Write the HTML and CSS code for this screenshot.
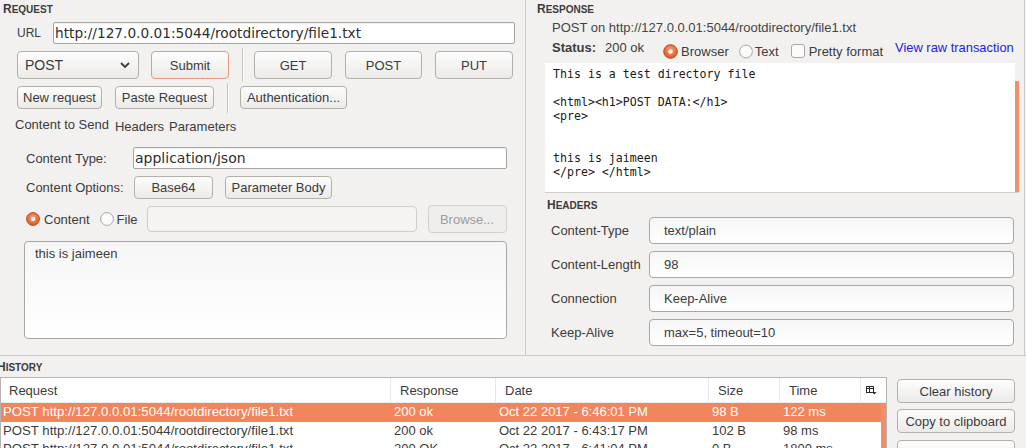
FILE: index.html
```html
<!DOCTYPE html>
<html>
<head>
<meta charset="utf-8">
<link rel="stylesheet" href="styles.css">
</head>
<body>
<div class="top">
  <section class="req">
    <div class="title"><span class="cap">R</span>EQUEST</div>
    <div class="url-row">
      <span class="url-label">URL</span>
      <div class="field url-field">http://127.0.0.01:5044/rootdirectory/file1.txt</div>
    </div>
    <div class="row-c">
      <div class="btn combo"><span class="combo-text">POST</span>
        <svg width="10" height="6" viewBox="0 0 10 6"><path d="M1 1 L5 5 L9 1" fill="none" stroke="#3c3c3c" stroke-width="1.8"/></svg>
      </div>
      <div class="btn submit">Submit</div>
      <div class="vsep sep-c"></div>
      <div class="btn w-get">GET</div>
      <div class="btn w-post">POST</div>
      <div class="btn w-put">PUT</div>
    </div>
    <div class="row-d">
      <div class="btn w-new">New request</div>
      <div class="btn w-paste">Paste Request</div>
      <div class="vsep sep-d"></div>
      <div class="btn w-auth">Authentication...</div>
    </div>
    <div class="tabs">
      <span class="tab tab-sel">Content to Send</span>
      <span class="tab tab-h">Headers</span>
      <span class="tab tab-p">Parameters</span>
    </div>
    <div class="tab-body">
      <div class="ct-row">
        <span class="lbl lbl-ct">Content Type:</span>
        <div class="field ct-field">application/json</div>
      </div>
      <div class="co-row">
        <span class="lbl lbl-co">Content Options:</span>
        <div class="btn w-b64">Base64</div>
        <div class="btn w-pb">Parameter Body</div>
      </div>
      <div class="radio-row">
        <svg class="radio r-content" width="14" height="14" viewBox="0 0 14 14"><defs><radialGradient id="og" cx="50%" cy="40%" r="60%"><stop offset="0" stop-color="#f8a47c"/><stop offset="1" stop-color="#dc5422"/></radialGradient></defs><circle cx="7" cy="7" r="6.4" fill="url(#og)" stroke="#bd4a1c" stroke-width="1"/><circle cx="7" cy="7" r="2.2" fill="#fdf0e8"/></svg>
        <span class="rlabel">Content</span>
        <svg class="radio r-file" width="14" height="14" viewBox="0 0 14 14"><circle cx="7" cy="7" r="6.4" fill="#fbfbfb" stroke="#a9a7a3" stroke-width="1"/></svg>
        <span class="rlabel">File</span>
        <div class="dis-field"></div>
        <div class="btn btn-dis w-browse">Browse...</div>
      </div>
      <div class="textarea">this is jaimeen</div>
    </div>
  </section>
  <section class="resp">
    <div class="title resp-title"><span class="cap">R</span>ESPONSE</div>
    <div class="resp-url">POST on http://127.0.0.01:5044/rootdirectory/file1.txt</div>
    <div class="status-row">
      <span class="st-label">Status:</span>
      <span class="st-val">200 ok</span>
      <svg class="radio r-browser" width="15" height="15" viewBox="0 0 15 15"><circle cx="7.5" cy="7.5" r="6.8" fill="url(#og)" stroke="#bd4a1c" stroke-width="1"/><circle cx="7.5" cy="7.5" r="2.3" fill="#fdf0e8"/></svg>
      <span class="opt opt-browser">Browser</span>
      <svg class="radio r-text" width="14" height="15" viewBox="0 0 14 15"><circle cx="7" cy="7.5" r="6.4" fill="#fbfbfb" stroke="#a9a7a3" stroke-width="1"/></svg>
      <span class="opt opt-text">Text</span>
      <svg class="check" width="14" height="14" viewBox="0 0 14 14"><rect x="0.5" y="0.5" width="13" height="13" rx="2.5" fill="#fbfbfb" stroke="#a9a7a3"/></svg>
      <span class="opt opt-pretty">Pretty format</span>
      <span class="link">View raw transaction</span>
    </div>
    <div class="resp-box">
      <pre class="resp-text">This is a test directory file

&lt;html&gt;&lt;h1&gt;POST DATA:&lt;/h1&gt;
&lt;pre&gt;


this is jaimeen
&lt;/pre&gt; &lt;/html&gt;</pre>
      <div class="vscroll"><div class="thumb"></div></div>
    </div>
    <div class="title hdr-title"><span class="cap">H</span>EADERS</div>
    <div class="hdr-grid">
      <span class="hlabel">Content-Type</span><div class="hval">text/plain</div>
      <span class="hlabel">Content-Length</span><div class="hval">98</div>
      <span class="hlabel">Connection</span><div class="hval">Keep-Alive</div>
      <span class="hlabel">Keep-Alive</span><div class="hval">max=5, timeout=10</div>
    </div>
  </section>
</div>
<div class="history">
  <div class="title hist-title"><span class="cap">H</span>ISTORY</div>
  <div class="hist-body">
    <div class="table">
      <div class="thead">
        <div class="th th-first">Request</div>
        <div class="th">Response</div>
        <div class="th">Date</div>
        <div class="th">Size</div>
        <div class="th">Time</div>
        <div class="th th-icon">
          <svg width="11" height="9" viewBox="0 0 11 9"><rect x="0.5" y="0.5" width="7" height="6" fill="none" stroke="#2a2a2a"/><line x1="0.5" y1="2.5" x2="7.5" y2="2.5" stroke="#2a2a2a"/><line x1="3.5" y1="0.5" x2="3.5" y2="6.5" stroke="#2a2a2a"/><path d="M6 6 L10.5 6 L8.25 8.5 Z" fill="#2a2a2a"/></svg>
        </div>
      </div>
      <div class="tbody">
        <div class="rows">
          <div class="tr sel"><span>POST http://127.0.0.01:5044/rootdirectory/file1.txt</span><span>200 ok</span><span>Oct 22 2017 - 6:46:01 PM</span><span>98 B</span><span>122 ms</span><span></span></div>
          <div class="tr"><span>POST http://127.0.0.01:5044/rootdirectory/file1.txt</span><span>200 ok</span><span>Oct 22 2017 - 6:43:17 PM</span><span>102 B</span><span>98 ms</span><span></span></div>
          <div class="tr"><span>POST http://127.0.0.01:5044/rootdirectory/file1.txt</span><span>200 OK</span><span>Oct 22 2017 - 6:41:04 PM</span><span>0 B</span><span>1800 ms</span><span></span></div>
        </div>
        <div class="tscroll"></div>
      </div>
    </div>
    <div class="hist-btns">
      <div class="btn hb hb1">Clear history</div>
      <div class="btn hb hb2">Copy to clipboard</div>
      <div class="btn hb hb3">Delete request</div>
    </div>
  </div>
</div>
</body>
</html>
```
FILE: styles.css
```css
* { box-sizing: border-box; }
html, body { margin: 0; padding: 0; }
body {
  width: 1026px; height: 448px; overflow: hidden;
  background: #f2f1f0;
  font-family: "Liberation Sans", Arial, sans-serif;
  font-size: 13px; color: #3c3c3c;
}
.top { display: flex; height: 356px; border-bottom: 1px solid #cdcbc7; }
.req { width: 526px; border-right: 1px solid #cdcbc7; }
.resp { width: 499px; border-right: 1px solid #cdcbc7; }

.title {
  height: 18px; padding-top: 1px; line-height: 18px;
  font-weight: bold; font-size: 10px; color: #3c3c3c; padding-left: 3px;
  white-space: nowrap;
}
.title .cap { font-size: 12px; line-height: 1; }

.btn {
  display: flex; align-items: center; justify-content: center;
  height: 100%; border: 1px solid #b3b0aa; border-radius: 4px;
  background: linear-gradient(#fdfdfd, #ebeae8);
  color: #3c3c3c; white-space: nowrap; flex: none;
}

/* URL row */
.url-row { display: flex; align-items: center; height: 22px; margin-top: 4px; padding-left: 17px; }
.url-label { width: 36px; font-size: 12px; }
.field {
  display: flex; align-items: center; height: 22px;
  background: #fff; border: 1px solid #a6a4a0; border-radius: 2px;
  box-shadow: inset 0 1px 1px rgba(0,0,0,0.06);
  padding-left: 1px; font-family: "DejaVu Sans", sans-serif; font-size: 14px; color: #2e2e2e;
  white-space: nowrap;
}
.url-field { width: 462px; font-size: 13.7px; }

/* row c */
.row-c { display: flex; align-items: center; height: 28px; margin-top: 7px; padding-left: 17px; }
.combo { width: 122px; justify-content: space-between; padding: 0 8px 0 7px; }
.combo-text { font-size: 14px; }
.submit { width: 78px; margin-left: 12px; border-color: #e29a80; }
.vsep { width: 2px; border-left: 1px solid #c6c4c0; border-right: 1px solid #fbfbfa; flex: none; }
.sep-c { height: 34px; margin-left: 13px; }
.w-get { width: 78px; margin-left: 10px; }
.w-post { width: 77px; margin-left: 13px; }
.w-put { width: 78px; margin-left: 13px; }

/* row d */
.row-d { display: flex; align-items: center; height: 23px; margin-top: 7px; padding-left: 17px; }
.w-new { width: 85px; }
.w-paste { width: 99px; margin-left: 13px; }
.sep-d { height: 30px; margin-left: 13px; }
.w-auth { width: 107px; margin-left: 11px; }

/* tabs */
.tabs { display: flex; height: 17px; margin-top: 8px; line-height: 15px; align-items: flex-start; }
.tab-sel { margin-left: 15px; }
.tab-h { margin-left: 6px; padding-top: 2px; }
.tab-p { margin-left: 5px; padding-top: 2px; }

.tab-body { padding-left: 24px; }
.lbl { padding-left: 2px; flex: none; }
.ct-row { display: flex; align-items: center; height: 22px; margin-top: 13px; }
.lbl-ct { width: 109px; }
.ct-field { width: 374px; }
.co-row { display: flex; align-items: center; height: 23px; margin-top: 7px; }
.lbl-co { width: 110px; }
.w-b64 { width: 79px; }
.w-pb { width: 107px; margin-left: 12px; }

.radio-row { display: flex; align-items: center; height: 28px; margin-top: 6px; }
.radio { flex: none; display: block; }
.r-content { margin-left: 2px; }
.rlabel { margin-left: 4px; }
.r-file { margin-left: 10px; }
.r-file + .rlabel { margin-left: 3px; }
.dis-field {
  width: 270px; height: 26px; margin-left: 9px;
  border: 1px solid #d0cecb; border-radius: 4px; background: #f5f4f3;
}
.btn-dis { background: #efeeed; border-color: #d2d0cd; color: #9c9c9c; }
.w-browse { width: 79px; margin-left: 11px; }

.textarea {
  width: 483px; height: 98px; margin-top: 8px;
  border: 1px solid #a9a7a3; border-radius: 4px;
  background: linear-gradient(#f6f6f6, #ffffff);
  padding: 4px 0 0 10px; line-height: 15px;
}

/* response */
.resp-title { padding-left: 11px; }
.resp-url { padding-left: 26px; margin-top: 2px; height: 15px; line-height: 15px; color: #444; white-space: nowrap; }
.status-row { display: flex; align-items: flex-start; height: 24px; margin-top: 3px; padding-left: 26px; line-height: 15px; white-space: nowrap; }
.st-label { font-weight: bold; margin-top: 2px; }
.st-val { margin-left: 9px; margin-top: 2px; }
.r-browser { margin-left: 19px; margin-top: 6px; }
.opt { margin-top: 6px; }
.opt-browser { margin-left: 3px; }
.r-text { margin-left: 10px; margin-top: 6px; }
.opt-text { margin-left: 2px; }
.check { margin-left: 12px; margin-top: 6px; flex: none; display: block; }
.opt-pretty { margin-left: 4px; }
.link { margin-left: 12px; margin-top: 2px; color: #2121e6; font-size: 12.9px; }

.resp-box { display: flex; height: 130px; margin-top: 1px; margin-left: 19px; width: 474px; border-bottom: 1px solid #cfcdca; }
.resp-text {
  margin: 0; width: 470px; height: 129px; background: #fff; overflow: hidden;
  padding: 4px 0 0 8px;
  font-family: "DejaVu Sans Mono", monospace; font-size: 11.6px; line-height: 14px; color: #1a1a1a;
}
.vscroll { width: 4px; }
.thumb { margin-top: 18px; height: 111px; background: #f28f68; }

.hdr-title { margin-top: 3px; padding-left: 21px; }
.hdr-grid {
  display: grid; grid-template-columns: 123px 365px; grid-auto-rows: 27px; row-gap: 7px;
  margin-top: 3px;
}
.hlabel { display: flex; align-items: center; padding-left: 25px; }
.hval {
  display: flex; align-items: center; padding-left: 14px;
  border: 1px solid #a9a7a3; border-radius: 4px;
  background: linear-gradient(#f6f6f6, #ffffff);
}

/* history */
.hist-title { margin-top: 2px; margin-left: -6px; height: 19px; }
.hist-body { display: flex; align-items: flex-start; }
.table { width: 887px; height: 80px; border: 1px solid #b5b4b1; border-bottom: none; background: #fff; flex: none; }
.thead { display: grid; grid-template-columns: 390px 105px 213px 71px 81px 25px; height: 25px; }
.th { display: flex; align-items: center; padding-left: 9px; border-right: 1px solid #e8e8e8; border-bottom: 1px solid #ececec; }
.th-first { padding-left: 8px; }
.th-icon { border-right: none; padding-left: 5px; }
.tbody { display: flex; }
.rows { width: 880px; }
.tr { display: grid; grid-template-columns: 390px 105px 213px 71px 81px 20px; height: 18.5px; line-height: 18.5px; white-space: nowrap; }
.tr span { padding-left: 3px; overflow: hidden; }
.tr span:first-child { padding-left: 2px; font-size: 13.2px; }
.tr.sel { background: #f1855b; color: #fff; }
.tscroll { width: 5px; height: 55px; background: #f28f68; }

.hist-btns { margin-left: 10px; margin-top: 2px; display: flex; flex-direction: column; }
.hb { width: 118px; height: 24px; }
.hb2 { margin-top: 6px; }
.hb3 { margin-top: 7px; }
```
